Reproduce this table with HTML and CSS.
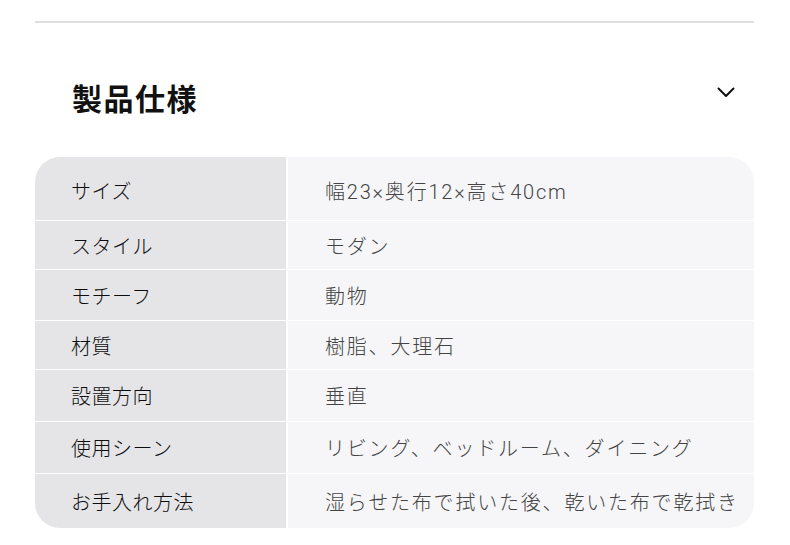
FILE: index.html
```html
<!DOCTYPE html>
<html lang="ja">
<head>
<meta charset="utf-8">
<link rel="stylesheet" href="styles.css">
</head>
<body>
<div class="page">
  <div class="divider"></div>
  <div class="section-head">
    <h2 class="title">製品仕様</h2>
    <svg class="chevron" width="18" height="11" viewBox="0 0 18 11"><path d="M1.5 1.5 L9 9 L16.5 1.5" fill="none" stroke="#111" stroke-width="2" stroke-linecap="round" stroke-linejoin="round"/></svg>
  </div>
  <div class="spec">
    <div class="row r1"><div class="label">サイズ</div><div class="value">幅23×奥行12×高さ40cm</div></div>
    <div class="row r2"><div class="label">スタイル</div><div class="value">モダン</div></div>
    <div class="row r3"><div class="label">モチーフ</div><div class="value">動物</div></div>
    <div class="row r4"><div class="label">材質</div><div class="value">樹脂、大理石</div></div>
    <div class="row r5"><div class="label">設置方向</div><div class="value">垂直</div></div>
    <div class="row r6"><div class="label">使用シーン</div><div class="value">リビング、ベッドルーム、ダイニング</div></div>
    <div class="row r7"><div class="label">お手入れ方法</div><div class="value">湿らせた布で拭いた後、乾いた布で乾拭き</div></div>
  </div>
</div>
</body>
</html>
```

FILE: styles.css
```css
* { box-sizing: border-box; }
html, body { margin: 0; padding: 0; background: #fff; }
body {
  font-family: "Roboto", "Noto Sans CJK JP", "Noto Sans", sans-serif;
  color: #222;
}
.page {
  width: 719px;
  margin-left: 35px;
}
.divider {
  margin-top: 21px;
  height: 2px;
  background: #dedede;
}
.section-head {
  display: flex;
  align-items: center;
  justify-content: space-between;
  height: 134px;
  padding: 0 19px 0 37px;
}
.title {
  margin: 0;
  font-family: "Noto Sans CJK JP", sans-serif;
  font-size: 30px;
  font-weight: 700;
  letter-spacing: 1.5px;
  line-height: 40px;
  color: #111;
  padding-top: 14px;
}
.chevron { display: block; margin-top: 4px; }
.spec {
  border-radius: 25px;
  overflow: hidden;
  display: flex;
  flex-direction: column;
  gap: 1px;
  background: #fff;
}
.row {
  display: grid;
  grid-template-columns: 251px 1fr;
  column-gap: 2px;
}
.r1 { height: 63px; }
.r2 { height: 48px; }
.r3 { height: 50px; }
.r4 { height: 48px; }
.r5 { height: 51px; }
.r6 { height: 51px; }
.r7 { height: 54px; }
.label, .value {
  display: flex;
  align-items: center;
  font-size: 20px;
  font-weight: 300;
}
.label {
  background: #e5e5e8;
  padding-left: 36px;
  color: #0d0d0d;
  letter-spacing: 0.5px;
}
.value {
  background: #f6f6f8;
  padding-left: 37px;
  color: #444;
  white-space: nowrap;
  letter-spacing: 1.8px;
}
.r1 .label, .r1 .value { padding-top: 3px; }
```
